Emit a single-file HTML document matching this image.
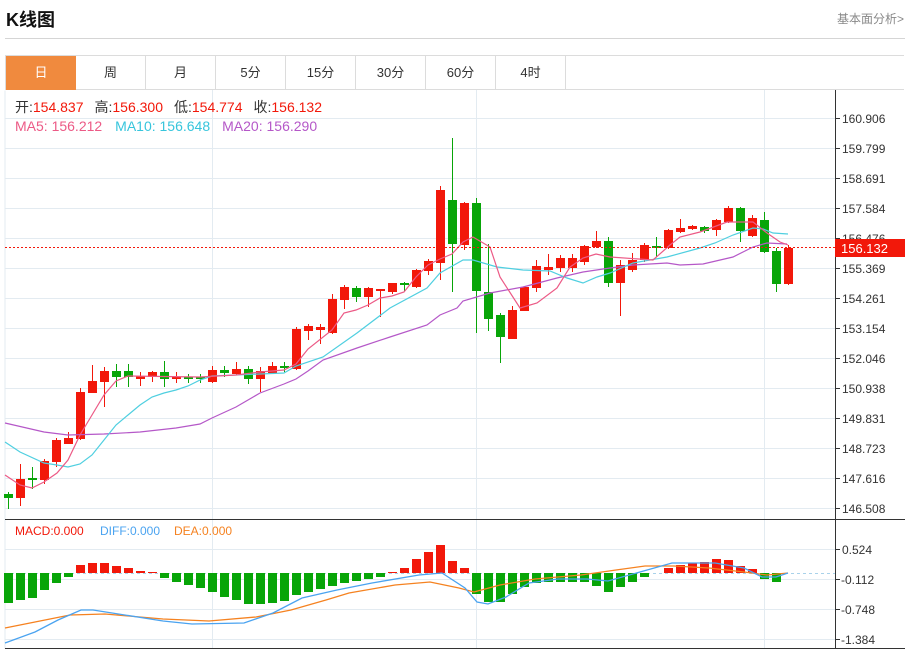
<!DOCTYPE html>
<html><head><meta charset="utf-8">
<style>
body{margin:0;width:910px;height:651px;background:#fff;font-family:"Liberation Sans","Noto Sans CJK SC",sans-serif;overflow:hidden;position:relative}
.t{position:absolute;left:6px;top:6px;font-size:18px;font-weight:bold;color:#111}
.r{position:absolute;right:6px;top:10px;font-size:12px;color:#888}
.hl{position:absolute;left:5px;top:38px;width:900px;height:1px;background:#d5d5d5}
.tabs{position:absolute;left:5px;top:55px;width:899px;height:35px;border:1px solid #dcdcdc;border-right:none;box-sizing:border-box}
.tab{position:absolute;top:0;width:70px;height:34px;line-height:34px;text-align:center;font-size:13px;color:#333;border-right:1px solid #dcdcdc;box-sizing:border-box}
.tab.a{background:#f08a3e;color:#fff;border-right:none}
svg{position:absolute;left:0;top:0}
</style></head><body>
<div class="t">K线图</div>
<div class="r">基本面分析&gt;</div>
<div class="hl"></div>
<div class="tabs">
<div class="tab a" style="left:0">日</div>
<div class="tab" style="left:70px">周</div>
<div class="tab" style="left:140px">月</div>
<div class="tab" style="left:210px">5分</div>
<div class="tab" style="left:280px">15分</div>
<div class="tab" style="left:350px">30分</div>
<div class="tab" style="left:420px">60分</div>
<div class="tab" style="left:490px">4时</div>
</div>
<svg width="910" height="651" xmlns="http://www.w3.org/2000/svg" font-family="Liberation Sans, Noto Sans CJK SC, sans-serif">
<g stroke="#e3ebf1" stroke-width="1">
<line x1="5" y1="90.5" x2="5" y2="649"/>
<line x1="5" y1="118.5" x2="835" y2="118.5"/><line x1="5" y1="148.5" x2="835" y2="148.5"/><line x1="5" y1="178.5" x2="835" y2="178.5"/><line x1="5" y1="208.5" x2="835" y2="208.5"/><line x1="5" y1="238.5" x2="835" y2="238.5"/><line x1="5" y1="268.5" x2="835" y2="268.5"/><line x1="5" y1="298.5" x2="835" y2="298.5"/><line x1="5" y1="328.5" x2="835" y2="328.5"/><line x1="5" y1="358.5" x2="835" y2="358.5"/><line x1="5" y1="388.5" x2="835" y2="388.5"/><line x1="5" y1="418.5" x2="835" y2="418.5"/><line x1="5" y1="448.5" x2="835" y2="448.5"/><line x1="5" y1="478.5" x2="835" y2="478.5"/><line x1="5" y1="508.5" x2="835" y2="508.5"/>
<line x1="5" y1="549.5" x2="835" y2="549.5"/><line x1="5" y1="579.5" x2="835" y2="579.5"/><line x1="5" y1="609.5" x2="835" y2="609.5"/><line x1="5" y1="639.5" x2="835" y2="639.5"/>
<line x1="212.5" y1="90" x2="212.5" y2="649"/><line x1="476.5" y1="90" x2="476.5" y2="649"/><line x1="764.5" y1="90" x2="764.5" y2="649"/>
</g>
<g stroke="#333" stroke-width="1">
<line x1="835.5" y1="90" x2="835.5" y2="649"/>
<line x1="5" y1="519.5" x2="905" y2="519.5"/>
<line x1="5" y1="648.5" x2="905" y2="648.5"/>
<line x1="835" y1="118.5" x2="840" y2="118.5"/><line x1="835" y1="148.5" x2="840" y2="148.5"/><line x1="835" y1="178.5" x2="840" y2="178.5"/><line x1="835" y1="208.5" x2="840" y2="208.5"/><line x1="835" y1="238.5" x2="840" y2="238.5"/><line x1="835" y1="268.5" x2="840" y2="268.5"/><line x1="835" y1="298.5" x2="840" y2="298.5"/><line x1="835" y1="328.5" x2="840" y2="328.5"/><line x1="835" y1="358.5" x2="840" y2="358.5"/><line x1="835" y1="388.5" x2="840" y2="388.5"/><line x1="835" y1="418.5" x2="840" y2="418.5"/><line x1="835" y1="448.5" x2="840" y2="448.5"/><line x1="835" y1="478.5" x2="840" y2="478.5"/><line x1="835" y1="508.5" x2="840" y2="508.5"/>
<line x1="835" y1="549.5" x2="840" y2="549.5"/><line x1="835" y1="579.5" x2="840" y2="579.5"/><line x1="835" y1="609.5" x2="840" y2="609.5"/><line x1="835" y1="639.5" x2="840" y2="639.5"/>
</g>
<g font-size="12" fill="#333">
<text x="842" y="123">160.906</text><text x="842" y="153">159.799</text><text x="842" y="183">158.691</text><text x="842" y="213">157.584</text><text x="842" y="243">156.476</text><text x="842" y="273">155.369</text><text x="842" y="303">154.261</text><text x="842" y="333">153.154</text><text x="842" y="363">152.046</text><text x="842" y="393">150.938</text><text x="842" y="423">149.831</text><text x="842" y="453">148.723</text><text x="842" y="483">147.616</text><text x="842" y="513">146.508</text>
<text x="842" y="554">0.524</text><text x="841" y="584">-0.112</text><text x="841" y="614">-0.748</text><text x="841" y="644">-1.384</text>
</g>
<g fill="#08a508">
<rect x="8" y="492" width="1" height="17"/><rect x="4" y="494" width="9" height="4"/>
<rect x="32" y="467" width="1" height="22"/><rect x="28" y="478" width="9" height="2"/>
<rect x="116" y="364" width="1" height="23"/><rect x="112" y="371" width="9" height="6"/>
<rect x="128" y="364" width="1" height="23"/><rect x="124" y="371" width="9" height="6"/>
<rect x="164" y="361" width="1" height="26"/><rect x="160" y="372" width="9" height="7"/>
<rect x="188" y="374" width="1" height="9"/><rect x="184" y="377" width="9" height="2"/>
<rect x="200" y="374" width="1" height="9"/><rect x="196" y="377" width="9" height="2"/>
<rect x="224" y="366" width="1" height="11"/><rect x="220" y="370" width="9" height="3"/>
<rect x="248" y="366" width="1" height="18"/><rect x="244" y="369" width="9" height="10"/>
<rect x="284" y="362" width="1" height="10"/><rect x="280" y="366" width="9" height="2"/>
<rect x="356" y="286" width="1" height="16"/><rect x="352" y="288" width="9" height="9"/>
<rect x="404" y="282" width="1" height="9"/><rect x="400" y="283" width="9" height="2"/>
<rect x="452" y="138" width="1" height="154"/><rect x="448" y="200" width="9" height="44"/>
<rect x="476" y="198" width="1" height="135"/><rect x="472" y="203" width="9" height="88"/>
<rect x="488" y="244" width="1" height="87"/><rect x="484" y="292" width="9" height="27"/>
<rect x="500" y="313" width="1" height="50"/><rect x="496" y="315" width="9" height="22"/>
<rect x="608" y="237" width="1" height="50"/><rect x="604" y="241" width="9" height="42"/>
<rect x="656" y="237" width="1" height="20"/><rect x="652" y="246" width="9" height="2"/>
<rect x="704" y="226" width="1" height="7"/><rect x="700" y="227" width="9" height="4"/>
<rect x="740" y="207" width="1" height="35"/><rect x="736" y="208" width="9" height="23"/>
<rect x="764" y="212" width="1" height="41"/><rect x="760" y="220" width="9" height="32"/>
<rect x="776" y="248" width="1" height="44"/><rect x="772" y="251" width="9" height="33"/>
</g>
<g fill="#f2180a">
<rect x="20" y="464" width="1" height="42"/><rect x="16" y="479" width="9" height="19"/>
<rect x="44" y="459" width="1" height="25"/><rect x="40" y="461" width="9" height="19"/>
<rect x="56" y="438" width="1" height="29"/><rect x="52" y="440" width="9" height="22"/>
<rect x="68" y="432" width="1" height="12"/><rect x="64" y="438" width="9" height="6"/>
<rect x="80" y="388" width="1" height="52"/><rect x="76" y="392" width="9" height="47"/>
<rect x="92" y="365" width="1" height="28"/><rect x="88" y="381" width="9" height="12"/>
<rect x="104" y="367" width="1" height="40"/><rect x="100" y="371" width="9" height="11"/>
<rect x="140" y="372" width="1" height="14"/><rect x="136" y="376" width="9" height="3"/>
<rect x="152" y="371" width="1" height="11"/><rect x="148" y="372" width="9" height="5"/>
<rect x="176" y="372" width="1" height="11"/><rect x="172" y="377" width="9" height="2"/>
<rect x="212" y="366" width="1" height="17"/><rect x="208" y="370" width="9" height="12"/>
<rect x="236" y="362" width="1" height="13"/><rect x="232" y="369" width="9" height="5"/>
<rect x="260" y="367" width="1" height="25"/><rect x="256" y="371" width="9" height="8"/>
<rect x="272" y="362" width="1" height="12"/><rect x="268" y="366" width="9" height="7"/>
<rect x="296" y="327" width="1" height="43"/><rect x="292" y="329" width="9" height="40"/>
<rect x="308" y="324" width="1" height="16"/><rect x="304" y="326" width="9" height="5"/>
<rect x="320" y="324" width="1" height="20"/><rect x="316" y="327" width="9" height="3"/>
<rect x="332" y="294" width="1" height="40"/><rect x="328" y="299" width="9" height="34"/>
<rect x="344" y="285" width="1" height="24"/><rect x="340" y="287" width="9" height="13"/>
<rect x="368" y="287" width="1" height="20"/><rect x="364" y="288" width="9" height="9"/>
<rect x="380" y="289" width="1" height="28"/><rect x="376" y="289" width="9" height="2"/>
<rect x="392" y="283" width="1" height="11"/><rect x="388" y="283" width="9" height="9"/>
<rect x="416" y="269" width="1" height="19"/><rect x="412" y="270" width="9" height="17"/>
<rect x="428" y="259" width="1" height="16"/><rect x="424" y="261" width="9" height="10"/>
<rect x="440" y="186" width="1" height="94"/><rect x="436" y="190" width="9" height="73"/>
<rect x="464" y="202" width="1" height="48"/><rect x="460" y="203" width="9" height="42"/>
<rect x="512" y="306" width="1" height="33"/><rect x="508" y="310" width="9" height="29"/>
<rect x="524" y="286" width="1" height="25"/><rect x="520" y="287" width="9" height="24"/>
<rect x="536" y="260" width="1" height="32"/><rect x="532" y="266" width="9" height="22"/>
<rect x="548" y="254" width="1" height="21"/><rect x="544" y="267" width="9" height="3"/>
<rect x="560" y="255" width="1" height="17"/><rect x="556" y="258" width="9" height="10"/>
<rect x="572" y="254" width="1" height="18"/><rect x="568" y="258" width="9" height="10"/>
<rect x="584" y="245" width="1" height="20"/><rect x="580" y="246" width="9" height="16"/>
<rect x="596" y="231" width="1" height="17"/><rect x="592" y="241" width="9" height="6"/>
<rect x="620" y="260" width="1" height="56"/><rect x="616" y="265" width="9" height="18"/>
<rect x="632" y="253" width="1" height="19"/><rect x="628" y="260" width="9" height="10"/>
<rect x="644" y="243" width="1" height="19"/><rect x="640" y="245" width="9" height="15"/>
<rect x="668" y="229" width="1" height="20"/><rect x="664" y="230" width="9" height="18"/>
<rect x="680" y="219" width="1" height="14"/><rect x="676" y="228" width="9" height="4"/>
<rect x="692" y="225" width="1" height="5"/><rect x="688" y="226" width="9" height="3"/>
<rect x="716" y="219" width="1" height="17"/><rect x="712" y="220" width="9" height="10"/>
<rect x="728" y="206" width="1" height="17"/><rect x="724" y="208" width="9" height="14"/>
<rect x="752" y="215" width="1" height="22"/><rect x="748" y="218" width="9" height="18"/>
<rect x="788" y="245" width="1" height="40"/><rect x="784" y="248" width="9" height="36"/>
</g>
<g fill="none" stroke-width="1.2">
<polyline stroke="#b558c8" points="5,423 44,432 68,435 104,434 140,432 176,428 200,424 212,418 236,407 260,393 284,384 296,379 308,371 323,360 357,348 390,337 427,325 440,315 457,308 463,301 490,293 523,287 557,278 583,272 610,268 633,265 667,263 680,265 703,264 733,257 753,247 767,243 787,244"/>
<polyline stroke="#4fcfe0" points="5,442 20,452 44,463 57,465 68,467 80,464 92,455 104,440 116,425 128,415 140,405 152,397 164,393 176,390 188,386 200,380 212,376 236,375 260,374 284,373 296,366 323,357 357,333 390,308 427,288 440,273 463,260 473,260 497,267 523,270 550,271 567,278 583,283 597,277 610,273 633,263 667,257 700,248 715,243 733,235 753,228 763,229 773,233 788,234"/>
<polyline stroke="#ec5a86" points="5,475 20,485 32,488 44,482 57,473 68,460 80,435 92,415 104,395 116,381 128,376 200,377 236,375 260,372 284,370 296,364 308,349 332,330 344,313 356,310 368,305 380,298 392,296 404,292 416,277 428,265 440,259 452,254 463,242 473,237 490,247 500,277 520,308 537,303 557,288 570,267 583,258 596,254 610,257 653,260 670,245 680,237 700,232 727,222 753,222 767,233 780,242 788,245"/>
</g>
<line x1="5" y1="247.5" x2="835" y2="247.5" stroke="#f2180a" stroke-dasharray="2,2"/>
<rect x="835" y="239" width="70" height="18" fill="#f2180a"/>
<text x="841" y="253" font-size="13" fill="#fff">156.132</text>
<line x1="5" y1="573.5" x2="835" y2="573.5" stroke="#a9d2ea" stroke-dasharray="3,3"/>
<g fill="#08a508">
<rect x="4" y="573" width="9" height="30"/><rect x="16" y="573" width="9" height="27"/><rect x="28" y="573" width="9" height="25"/><rect x="40" y="573" width="9" height="17"/><rect x="52" y="573" width="9" height="10"/><rect x="64" y="573" width="9" height="4"/>
<rect x="160" y="573" width="9" height="5"/><rect x="172" y="573" width="9" height="9"/><rect x="184" y="573" width="9" height="12"/><rect x="196" y="573" width="9" height="15"/><rect x="208" y="573" width="9" height="19"/><rect x="220" y="573" width="9" height="24"/><rect x="232" y="573" width="9" height="27"/><rect x="244" y="573" width="9" height="31"/><rect x="256" y="573" width="9" height="31"/><rect x="268" y="573" width="9" height="30"/><rect x="280" y="573" width="9" height="28"/><rect x="292" y="573" width="9" height="22"/><rect x="304" y="573" width="9" height="19"/><rect x="316" y="573" width="9" height="16"/><rect x="328" y="573" width="9" height="13"/><rect x="340" y="573" width="9" height="10"/><rect x="352" y="573" width="9" height="8"/><rect x="364" y="573" width="9" height="6"/><rect x="376" y="573" width="9" height="4"/>
<rect x="472" y="573" width="9" height="21"/><rect x="484" y="573" width="9" height="29"/><rect x="496" y="573" width="9" height="29"/><rect x="508" y="573" width="9" height="21"/><rect x="520" y="573" width="9" height="14"/><rect x="532" y="573" width="9" height="10"/><rect x="544" y="573" width="9" height="9"/><rect x="556" y="573" width="9" height="9"/><rect x="568" y="573" width="9" height="9"/><rect x="580" y="573" width="9" height="9"/><rect x="592" y="573" width="9" height="13"/><rect x="604" y="573" width="9" height="19"/><rect x="616" y="573" width="9" height="14"/><rect x="628" y="573" width="9" height="9"/><rect x="640" y="573" width="9" height="4"/>
<rect x="760" y="573" width="9" height="6"/><rect x="772" y="573" width="9" height="9"/>
</g>
<g fill="#f2180a">
<rect x="76" y="565" width="9" height="8"/><rect x="88" y="563" width="9" height="10"/><rect x="100" y="563" width="9" height="10"/><rect x="112" y="566" width="9" height="7"/><rect x="124" y="568" width="9" height="5"/><rect x="136" y="571" width="9" height="2"/><rect x="148" y="572" width="9" height="1"/>
<rect x="388" y="572" width="9" height="1"/><rect x="400" y="568" width="9" height="5"/><rect x="412" y="559" width="9" height="14"/><rect x="424" y="552" width="9" height="21"/><rect x="436" y="545" width="9" height="28"/><rect x="448" y="561" width="9" height="12"/><rect x="460" y="568" width="9" height="5"/>
<rect x="664" y="568" width="9" height="5"/><rect x="676" y="565" width="9" height="8"/><rect x="688" y="563" width="9" height="10"/><rect x="700" y="562" width="9" height="11"/><rect x="712" y="559" width="9" height="14"/><rect x="724" y="560" width="9" height="13"/><rect x="736" y="566" width="9" height="7"/><rect x="748" y="569" width="9" height="4"/>
</g>
<g fill="none" stroke-width="1.3">
<polyline stroke="#f58220" points="5,628 35,622 70,615 105,614 163,619 209,621 256,617 291,610 326,600 349,593 395,585 430,582 459,588 474,592 500,585 535,579 581,575 616,570 645,566 674,566 709,568 744,572 767,575 788,573"/>
<polyline stroke="#4aa3f0" points="5,643 35,632 58,620 81,610 93,610 163,621 192,624 244,623 273,613 302,598 337,590 372,583 419,575 442,573 465,588 477,602 488,604 506,597 529,583 558,579 587,579 608,581 640,572 672,563 715,563 744,568 762,577 776,577 788,573"/>
</g>
<g font-size="12">
<text x="15" y="535" fill="#f2180a">MACD:0.000</text>
<text x="100" y="535" fill="#4aa3f0">DIFF:0.000</text>
<text x="174" y="535" fill="#f58220">DEA:0.000</text>
</g>
<g font-size="14">
<text x="15" y="112"><tspan fill="#333">开:</tspan><tspan fill="#f2180a">154.837</tspan><tspan fill="#333" dx="11">高:</tspan><tspan fill="#f2180a">156.300</tspan><tspan fill="#333" dx="11">低:</tspan><tspan fill="#f2180a">154.774</tspan><tspan fill="#333" dx="11">收:</tspan><tspan fill="#f2180a">156.132</tspan></text>
<text x="15" y="131"><tspan fill="#ec5a86">MA5: 156.212</tspan><tspan fill="#37c5dc" dx="13">MA10: 156.648</tspan><tspan fill="#b558c8" dx="12">MA20: 156.290</tspan></text>
</g>
</svg>
</body></html>
